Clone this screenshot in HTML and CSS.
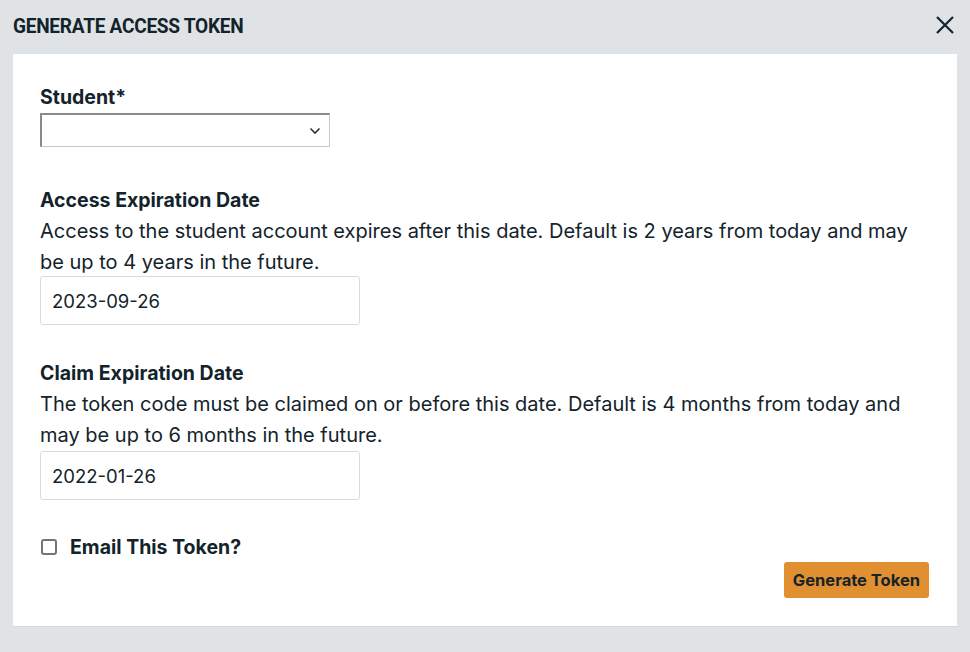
FILE: index.html
```html
<!DOCTYPE html>
<html>
<head>
<meta charset="utf-8">
<link rel="stylesheet" href="styles.css">
</head>
<body>
<div class="dialog">
  <header class="dialog-header">
    <h1 class="dialog-title">GENERATE ACCESS TOKEN</h1>
    <button class="close-btn" aria-label="Close">
      <svg width="20" height="20" viewBox="0 0 20 20"><path d="M2 2 L18 18 M18 2 L2 18" stroke="#13232b" stroke-width="2.2" fill="none"/></svg>
    </button>
  </header>
  <div class="panel">
    <div class="field">
      <label class="label">Student*</label>
      <div class="select">
        <svg class="chev" width="12" height="8" viewBox="0 0 12 8"><path d="M1.5 1.5 L6 6 L10.5 1.5" stroke="#333" stroke-width="1.6" fill="none"/></svg>
      </div>
    </div>
    <div class="field gap-lg">
      <label class="label">Access Expiration Date</label>
      <p class="desc">Access to the student account expires after this date. Default is 2 years from today and may be up to 4 years in the future.</p>
      <div class="input">2023-09-26</div>
    </div>
    <div class="field gap-md">
      <label class="label">Claim Expiration Date</label>
      <p class="desc">The token code must be claimed on or before this date. Default is 4 months from today and may be up to 6 months in the future.</p>
      <div class="input">2022-01-26</div>
    </div>
    <div class="check-row">
      <span class="checkbox"></span>
      <span class="label">Email This Token?</span>
    </div>
    <div class="actions">
      <button class="primary">Generate Token</button>
    </div>
  </div>
</div>
</body>
</html>
```

FILE: styles.css
```css
* { box-sizing: border-box; }
html, body { margin: 0; padding: 0; }
body {
  background: #e0e3e6;
  font-family: Inter, Roboto, "Liberation Sans", sans-serif;
  color: #13232b;
  width: 970px;
  height: 652px;
  overflow: hidden;
}
.dialog { display: flex; flex-direction: column; }
.dialog-header {
  height: 54px;
  display: flex;
  align-items: center;
  justify-content: space-between;
  padding: 0 15px 0 13px;
}
.dialog-title {
  margin: 0;
  font-family: Roboto, "Liberation Sans", sans-serif;
  font-size: 21px;
  font-weight: 700;
  letter-spacing: -0.3px;
  transform: scaleX(0.908);
  transform-origin: left center;
  position: relative;
  top: -1px;
  white-space: nowrap;
}
.close-btn {
  background: none;
  border: 0;
  padding: 0;
  width: 20px;
  height: 20px;
  display: flex;
  position: relative;
  top: -2px;
}
.panel {
  margin: 0 13px;
  background: #fff;
  padding: 31px 28px 28px 27px;
  border-bottom: 1px solid #d6d9dc;
  height: 573px;
}
.field { display: flex; flex-direction: column; align-items: flex-start; }
.gap-lg { margin-top: 41px; }
.gap-md { margin-top: 36px; }
.label {
  font-size: 19.5px;
  font-weight: 700;
  line-height: 24px;
}
.select {
  margin-top: 4px;
  width: 290px;
  height: 34px;
  border: 1px solid #c8c8c8;
  border-top: 2px solid #8a8a8a;
  border-left: 2px solid #8a8a8a;
  display: flex;
  align-items: center;
  justify-content: flex-end;
  padding-right: 8px;
}
.desc {
  margin: 4px 0 -2px;
  font-size: 20px;
  line-height: 31px;
}
.gap-md .desc { margin-bottom: 0; }
.input {
  width: 320px;
  height: 49px;
  border: 1px solid #d9dcdf;
  border-radius: 3px;
  padding: 0 11px;
  display: flex;
  align-items: center;
  font-size: 18.5px;
}
.check-row {
  margin-top: 35px;
  display: flex;
  align-items: center;
}
.checkbox {
  width: 16px;
  height: 16px;
  border: 2px solid #76727a;
  border-radius: 3px;
  margin: 0 13px 0 1px;
}
.actions {
  display: flex;
  justify-content: flex-end;
  margin-top: 3px;
}
.primary {
  background: #e08f31;
  border: 0;
  border-radius: 3px;
  height: 36px;
  padding: 0 9px;
  font-family: Inter, Roboto, "Liberation Sans", sans-serif;
  font-size: 16.5px;
  font-weight: 700;
  color: #13232b;
}
```
